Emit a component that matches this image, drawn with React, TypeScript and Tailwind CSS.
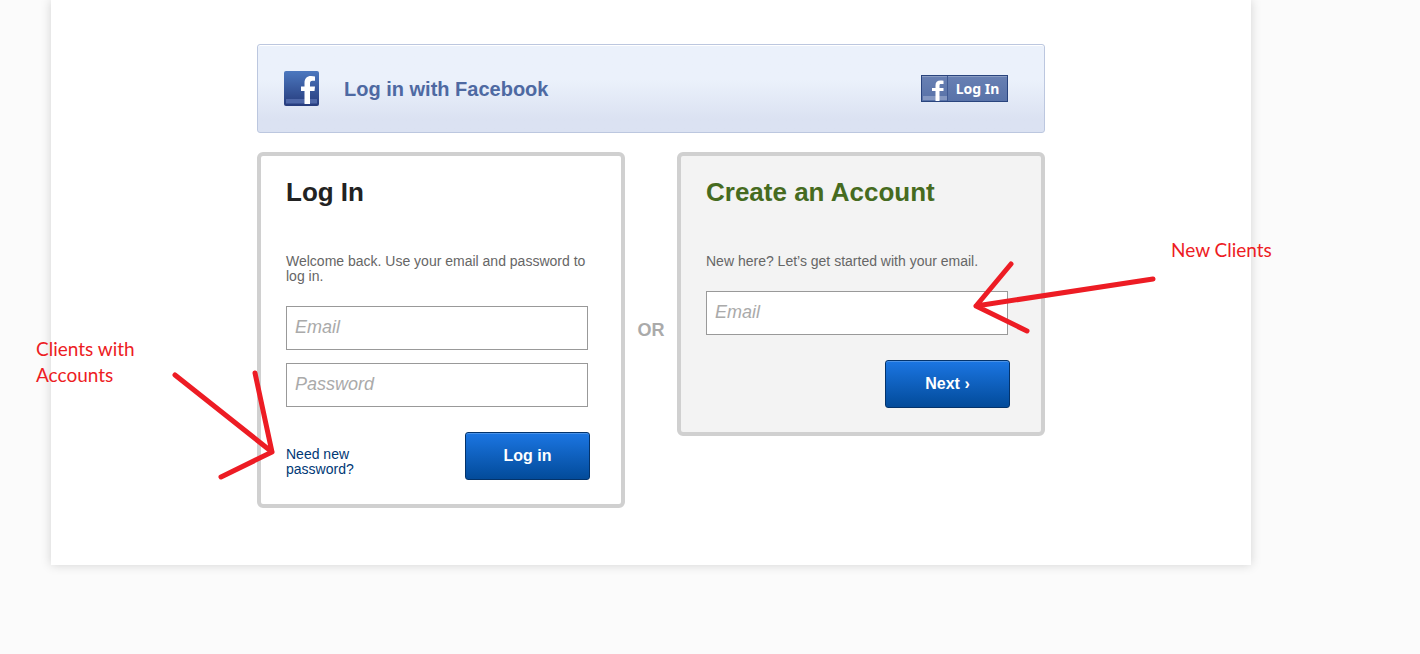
import type { ReactNode } from "react";

function App() {
  return (
    <div className="min-h-screen overflow-x-hidden bg-[#fbfbfb] pb-12 font-['Liberation_Sans',Arial,sans-serif]">
      <main className="ml-[51px] mr-[169px] bg-white pt-11 pb-[57px] shadow-[0_0_10px_rgba(0,0,0,0.17)]">
        <div className="mx-auto max-w-[788px]">
          <FacebookBanner />

          <div className="relative mt-[19px]">
            <div className="flex items-start justify-between">
              <Panel title="Log In" className="bg-white" titleClass="text-[#222]">
                <p className="text-sm leading-[15px] text-[#666]">
                  Welcome back. Use your email and password to log in.
                </p>
                <Field type="email" label="Email" className="mt-[22px]" />
                <Field type="password" label="Password" className="mt-[13px]" />
                <div className="mt-[25px] flex items-end justify-between">
                  <a href="#reset" className="mb-[3px] w-20 text-sm leading-[15px] text-[#003875]">
                    Need new password?
                  </a>
                  <SubmitButton>Log in</SubmitButton>
                </div>
              </Panel>

              <div className="self-center text-lg font-bold text-[#aaa]">OR</div>

              <Panel title="Create an Account" className="bg-[#f3f3f3]" titleClass="text-[#466b1f]">
                <p className="text-sm leading-[15px] text-[#666]">
                  New here? Let’s get started with your email.
                </p>
                <Field type="email" label="Email" className="mt-[22px]" />
                <div className="mt-[25px] flex justify-end">
                  <SubmitButton>Next ›</SubmitButton>
                </div>
              </Panel>
            </div>

            <Notes />
          </div>
        </div>
      </main>
    </div>
  );
}

export default App;

function FacebookBanner() {
  return (
    <section className="flex h-[89px] items-center rounded-[3px] border border-[#bcc7df] bg-linear-to-b from-[#ebf1fb] from-40% to-[#dbe2f2] to-85% pr-9 pl-[26px] shadow-[inset_0_1px_0_#fff]">
      <svg className="size-[35px] shrink-0" viewBox="0 0 35 35" aria-hidden="true">
        <defs>
          <linearGradient id="fb" x1="0" y1="0" x2="0" y2="1">
            <stop offset="0" stopColor="#4c78bf" />
            <stop offset="1" stopColor="#263b7c" />
          </linearGradient>
        </defs>
        <rect width="35" height="35" rx="2" fill="url(#fb)" />
        <rect x="2" y="28" width="31" height="4.5" fill="#4e67a8" />
        <path
          d="M20.5 33V20H17v-4.500h3.500V12c0-4.800 2.500-7 6.500-7 1.600 0 3 .2 4 .5v4.300h-2.500c-2 0-2.500 1-2.500 2.700v3h5l-.5 4.500H26v13z"
          fill="#fff"
        />
      </svg>
      <h2 className="ml-[25px] flex-1 text-xl font-bold text-[#4e69a2]">
        Log in with Facebook
      </h2>
      <button
        type="button"
        className="flex h-[27px] w-[87px] items-center border border-[#29447e] bg-linear-to-b from-[#6880b3] to-[#5872a8] shadow-[inset_0_1px_0_#8a9cc2]"
      >
        <svg className="h-[25px] w-[26px] shrink-0" viewBox="0 0 26 25" aria-hidden="true">
          <rect x="1" y="20" width="24" height="4" fill="#8497c1" />
          <path
            d="M13.5 25V15H10v-3h3.500V9.500c0-3.300 1.700-5 5-5 1 0 2 .1 3 .3V8H19c-1.300 0-1.500.6-1.500 1.700V12h4v3h-4v10z"
            fill="#fff"
          />
          <path d="M25.5 0v25" stroke="#3f5993" />
        </svg>
        <span className="flex-1 text-center font-['Noto_Sans',Tahoma,sans-serif] text-sm font-bold text-white">
          Log In
        </span>
      </button>
    </section>
  );
}

type PanelProps = {
  title: string;
  className: string;
  titleClass: string;
  children: ReactNode;
};

function Panel({ title, className, titleClass, children }: PanelProps) {
  return (
    <form
      className={`w-[368px] rounded-md border-4 border-[#d0d0d0] pt-5 pr-[31px] pb-6 pl-[25px] ${className}`}
      onSubmit={(e) => e.preventDefault()}
    >
      <h1 className={`mb-[46px] text-[26px] leading-8 font-bold ${titleClass}`}>{title}</h1>
      {children}
    </form>
  );
}

type FieldProps = {
  type: string;
  label: string;
  className: string;
};

function Field({ type, label, className }: FieldProps) {
  return (
    <input
      type={type}
      aria-label={label}
      placeholder={label}
      className={`block h-11 w-[302px] border border-[#999] bg-white px-2 pb-0.5 text-lg text-[#333] placeholder:text-[#aaa] placeholder:italic ${className}`}
    />
  );
}

function SubmitButton({ children }: { children: ReactNode }) {
  return (
    <button
      type="submit"
      className="h-12 w-[125px] rounded-[3px] border border-[#03336b] bg-linear-to-b from-[#1b76e3] to-[#034b9a] text-base font-bold text-white shadow-[inset_0_1px_0_#4a92e8]"
    >
      {children}
    </button>
  );
}

// Red callouts laid over the two forms
function Notes() {
  return (
    <div className="pointer-events-none font-[Lato,Calibri,sans-serif] text-[19px] leading-[26px] text-[#ed1c24]">
      <div className="absolute top-[184px] left-[-221px] w-[120px]">Clients with Accounts</div>
      <svg
        className="absolute top-[216px] left-[-87px] h-[114px] w-[110px]"
        viewBox="0 0 110 114"
        fill="none"
        stroke="currentColor"
        strokeWidth="5"
        strokeLinecap="round"
        strokeLinejoin="round"
      >
        <path d="M5 7L102 84M85 5L102 84L51 109" />
      </svg>
      <div className="absolute top-[85px] left-[914px] whitespace-nowrap">New Clients</div>
      <svg
        className="absolute top-[106px] left-[713px] h-[78px] w-[190px]"
        viewBox="0 0 190 78"
        fill="none"
        stroke="currentColor"
        strokeWidth="5"
        strokeLinecap="round"
        strokeLinejoin="round"
      >
        <path d="M183 21L6 48M41 6L6 48L57 73" />
      </svg>
    </div>
  );
}
